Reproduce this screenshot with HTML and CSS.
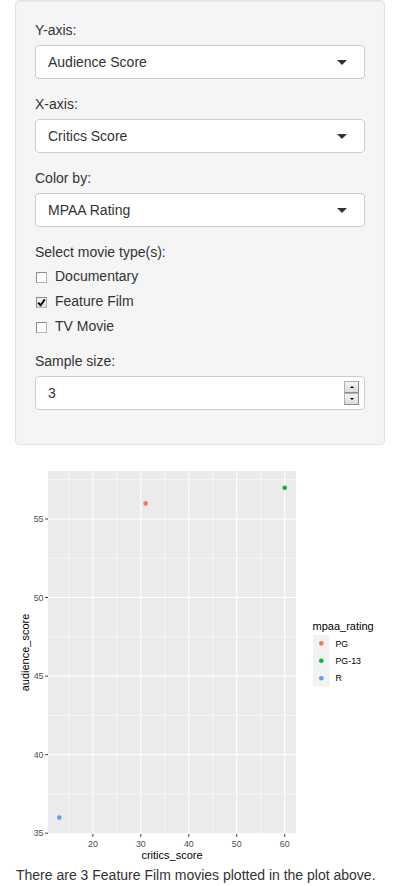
FILE: index.html
```html
<!DOCTYPE html>
<html>
<head>
<meta charset="utf-8">
<link rel="stylesheet" href="styles.css">
</head>
<body>
<div class="container">
  <div class="well">
    <div class="form-group">
      <label class="control-label">Y-axis:</label>
      <div class="select"><span>Audience Score</span><span class="caret"></span></div>
    </div>
    <div class="form-group">
      <label class="control-label">X-axis:</label>
      <div class="select"><span>Critics Score</span><span class="caret"></span></div>
    </div>
    <div class="form-group">
      <label class="control-label">Color by:</label>
      <div class="select"><span>MPAA Rating</span><span class="caret"></span></div>
    </div>
    <div class="form-group">
      <label class="control-label">Select movie type(s):</label>
      <div class="options">
        <div class="checkbox"><span class="box"></span><span>Documentary</span></div>
        <div class="checkbox"><span class="box checked"><svg width="9" height="9" viewBox="0 0 9 9"><path d="M1.2 4.6 L3.6 7.2 L7.8 1.4" fill="none" stroke="#000" stroke-width="1.9"/></svg></span><span>Feature Film</span></div>
        <div class="checkbox"><span class="box"></span><span>TV Movie</span></div>
      </div>
    </div>
    <div class="form-group">
      <label class="control-label">Sample size:</label>
      <div class="numeric">
        <span>3</span>
        <div class="spinner">
          <span class="spin up"><span class="tri-up"></span></span>
          <span class="spin down"><span class="tri-down"></span></span>
        </div>
      </div>
    </div>
  </div>

  <div class="plot">
    <svg width="370" height="400" viewBox="0 0 370 400" xmlns="http://www.w3.org/2000/svg">
      <rect x="33" y="6" width="248" height="363" fill="#EBEBEB"/>
      <g stroke="#FFFFFF" stroke-width="0.55">
        <line x1="33" x2="281" y1="328.9" y2="328.9"/>
        <line x1="33" x2="281" y1="250.4" y2="250.4"/>
        <line x1="33" x2="281" y1="171.8" y2="171.8"/>
        <line x1="33" x2="281" y1="93.3" y2="93.3"/>
        <line x1="33" x2="281" y1="14.7" y2="14.7"/>
        <line y1="6" y2="369" x1="53.9" x2="53.9"/>
        <line y1="6" y2="369" x1="101.8" x2="101.8"/>
        <line y1="6" y2="369" x1="149.8" x2="149.8"/>
        <line y1="6" y2="369" x1="197.8" x2="197.8"/>
        <line y1="6" y2="369" x1="245.7" x2="245.7"/>
      </g>
      <g stroke="#FFFFFF" stroke-width="1.1">
        <line x1="33" x2="281" y1="368.2" y2="368.2"/>
        <line x1="33" x2="281" y1="289.6" y2="289.6"/>
        <line x1="33" x2="281" y1="211.1" y2="211.1"/>
        <line x1="33" x2="281" y1="132.5" y2="132.5"/>
        <line x1="33" x2="281" y1="54" y2="54"/>
        <line y1="6" y2="369" x1="77.9" x2="77.9"/>
        <line y1="6" y2="369" x1="125.8" x2="125.8"/>
        <line y1="6" y2="369" x1="173.8" x2="173.8"/>
        <line y1="6" y2="369" x1="221.7" x2="221.7"/>
        <line y1="6" y2="369" x1="269.7" x2="269.7"/>
      </g>
      <circle cx="130.6" cy="38.4" r="2.3" fill="#F8766D"/>
      <circle cx="269.7" cy="22.7" r="2.3" fill="#00BA38"/>
      <circle cx="44.3" cy="352.6" r="2.3" fill="#619CFF"/>
      <g stroke="#333333" stroke-width="1">
        <line x1="30.2" x2="33" y1="368.2" y2="368.2"/>
        <line x1="30.2" x2="33" y1="289.6" y2="289.6"/>
        <line x1="30.2" x2="33" y1="211.1" y2="211.1"/>
        <line x1="30.2" x2="33" y1="132.5" y2="132.5"/>
        <line x1="30.2" x2="33" y1="54" y2="54"/>
        <line y1="369" y2="371.8" x1="77.9" x2="77.9"/>
        <line y1="369" y2="371.8" x1="125.8" x2="125.8"/>
        <line y1="369" y2="371.8" x1="173.8" x2="173.8"/>
        <line y1="369" y2="371.8" x1="221.7" x2="221.7"/>
        <line y1="369" y2="371.8" x1="269.7" x2="269.7"/>
      </g>
      <g class="tick" text-anchor="end">
        <text x="28.5" y="371.4">35</text>
        <text x="28.5" y="292.8">40</text>
        <text x="28.5" y="214.3">45</text>
        <text x="28.5" y="135.7">50</text>
        <text x="28.5" y="57.2">55</text>
      </g>
      <g class="tick" text-anchor="middle">
        <text x="77.9" y="381.5">20</text>
        <text x="125.8" y="381.5">30</text>
        <text x="173.8" y="381.5">40</text>
        <text x="221.7" y="381.5">50</text>
        <text x="269.7" y="381.5">60</text>
      </g>
      <text class="axis-title" x="157" y="394" text-anchor="middle">critics_score</text>
      <text class="axis-title" x="0" y="0" text-anchor="middle" transform="translate(14 187.5) rotate(-90)">audience_score</text>
      <text class="legend-title" x="297.5" y="164.5">mpaa_rating</text>
      <rect x="298" y="170" width="16.5" height="51.5" fill="#F2F2F2"/>
      <circle cx="306.3" cy="178.4" r="2.3" fill="#F8766D"/>
      <circle cx="306.3" cy="195.8" r="2.3" fill="#00BA38"/>
      <circle cx="306.3" cy="213.2" r="2.3" fill="#619CFF"/>
      <g class="legend-text">
        <text x="320.5" y="181.5">PG</text>
        <text x="320.5" y="198.9">PG-13</text>
        <text x="320.5" y="216.3">R</text>
      </g>
    </svg>
  </div>
  <div class="caption">There are 3 Feature Film movies plotted in the plot above.</div>
</div>
</body>
</html>
```

FILE: styles.css
```css
html, body {
  margin: 0;
  padding: 0;
  background: #ffffff;
}

body {
  font-family: "Liberation Sans", Arial, Helvetica, sans-serif;
  font-size: 14px;
  line-height: 20px;
  color: #333333;
}

.container {
  padding: 0 15px;
}

.well {
  background: #f5f5f5;
  border: 1px solid #e3e3e3;
  border-radius: 4px;
  padding: 19px;
  margin-bottom: 20px;
  box-shadow: inset 0 1px 1px rgba(0, 0, 0, 0.05);
}

.form-group {
  margin-bottom: 15px;
}

.control-label {
  display: block;
  margin-bottom: 5px;
  font-weight: normal;
  line-height: 20px;
  color: #333333;
}

.select {
  height: 34px;
  box-sizing: border-box;
  border: 1px solid #cccccc;
  border-radius: 4px;
  background: #ffffff;
  padding: 0 17px 0 12px;
  display: flex;
  align-items: center;
  justify-content: space-between;
  color: #333333;
}

.caret {
  width: 0;
  height: 0;
  border-left: 5px solid transparent;
  border-right: 5px solid transparent;
  border-top: 5px solid #333333;
}

.options {
  display: flex;
  flex-direction: column;
  gap: 5px;
  margin-top: -1px;
}

.checkbox {
  height: 20px;
  display: flex;
  align-items: center;
}

.box {
  width: 11px;
  height: 11px;
  box-sizing: border-box;
  border: 1px solid #8a8a8a;
  border-bottom-color: #b5b5b5;
  border-right-color: #b5b5b5;
  background: #ffffff;
  margin-left: 1px;
  margin-right: 8px;
  margin-top: 2px;
  display: flex;
  align-items: center;
  justify-content: center;
}

.box.checked {
  background: linear-gradient(#f6f6f6, #dcdcdc);
}

.box svg {
  display: block;
}

.numeric {
  height: 34px;
  box-sizing: border-box;
  border: 1px solid #cccccc;
  border-radius: 4px;
  background: #ffffff;
  padding: 0 5px 0 12px;
  display: flex;
  align-items: center;
  justify-content: space-between;
  color: #333333;
}

.spinner {
  display: flex;
  flex-direction: column;
  width: 15px;
}

.spin {
  height: 12px;
  box-sizing: border-box;
  background: linear-gradient(#f4f4f4, #dcdcdc);
  border: 1px solid #b0b0b0;
  border-right-color: #8c8c8c;
  border-bottom-color: #8c8c8c;
  display: flex;
  align-items: center;
  justify-content: center;
}

.tri-up {
  width: 0;
  height: 0;
  border-left: 2px solid transparent;
  border-right: 2px solid transparent;
  border-bottom: 2px solid #000;
}

.tri-down {
  width: 0;
  height: 0;
  border-left: 2px solid transparent;
  border-right: 2px solid transparent;
  border-top: 2px solid #000;
}

.plot {
  height: 400px;
}

.plot svg {
  display: block;
  font-family: "Liberation Sans", Arial, Helvetica, sans-serif;
}

.tick {
  font-size: 8.8px;
  fill: #4d4d4d;
}

.axis-title {
  font-size: 11px;
  fill: #000000;
}

.legend-title {
  font-size: 11px;
  fill: #000000;
}

.legend-text {
  font-size: 8.8px;
  fill: #000000;
}

.caption {
  line-height: 20px;
  color: #333333;
  padding-left: 1px;
}
```
